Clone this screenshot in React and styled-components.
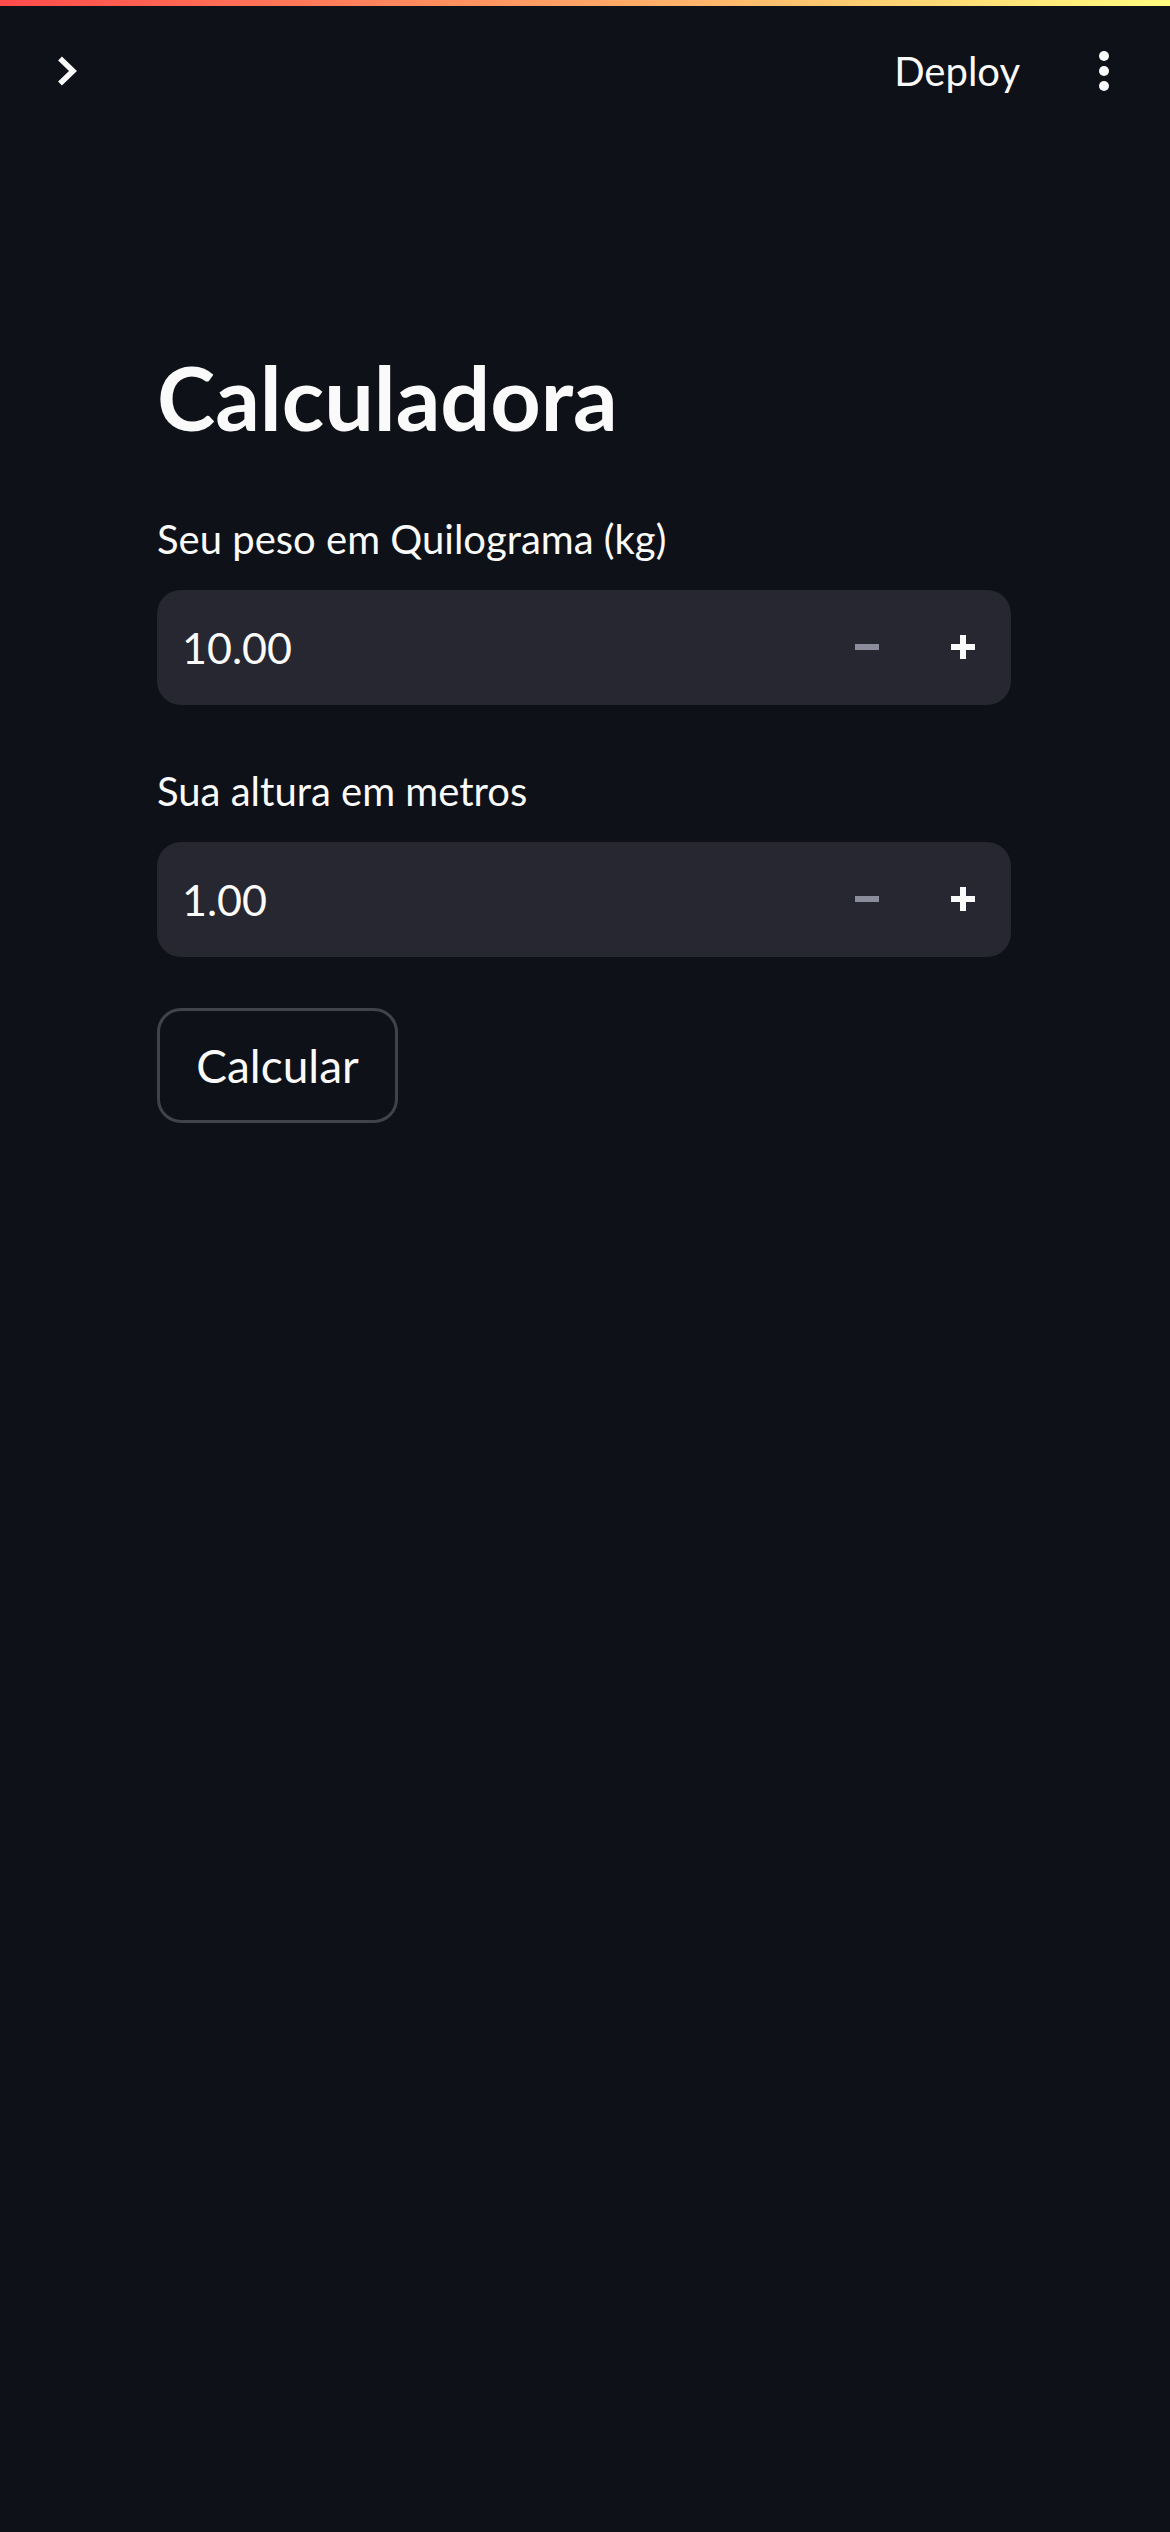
import React from 'react'
import styled, { createGlobalStyle } from 'styled-components'

const GlobalStyle = createGlobalStyle`
  html, body { margin: 0; padding: 0; background: #0e1117; }
  body { font-family: Lato, "Noto Sans", sans-serif; color: #fafafa; }
  * { box-sizing: border-box; }
`

const Page = styled.div`
  min-height: 2532px;
  background: #0e1117;
`

const Decoration = styled.div`
  height: 6px;
  background: linear-gradient(90deg, #ff4b4b, #fffd80);
`

const Header = styled.header`
  height: 130px;
  display: flex;
  align-items: center;
  justify-content: space-between;
  padding: 0 61px 0 57px;
`

const HeaderActions = styled.div`
  display: flex;
  align-items: center;
  gap: 79px;
`

const DeployLink = styled.span`
  font-size: 40px;
  line-height: 1;
`

const Main = styled.main`
  padding: 0 159px 0 157px;
`

const Title = styled.h1`
  margin: 209px 0 0;
  font-size: 88px;
  font-weight: 700;
  line-height: 1.2;
`

const Field = styled.div`
  margin-top: ${p => p.$top}px;
`

const Label = styled.label`
  display: block;
  font-size: 40px;
  line-height: 1.2;
  margin-bottom: 27px;
`

const InputBox = styled.div`
  height: 115px;
  border-radius: 24px;
  background: #262730;
  display: flex;
  align-items: center;
  padding-left: 25px;
`

const Value = styled.span`
  flex: 1;
  font-size: 43px;
`

const Step = styled.div`
  width: 96px;
  height: 100%;
  display: flex;
  align-items: center;
  justify-content: center;
`

const Minus = styled.span`
  width: 24px;
  height: 6px;
  background: #8b8d9c;
`

const Plus = styled.span`
  position: relative;
  width: 24px;
  height: 24px;
  &::before, &::after {
    content: '';
    position: absolute;
    background: #fafafa;
  }
  &::before { left: 0; top: 9px; width: 24px; height: 6px; }
  &::after { left: 9px; top: 0; width: 6px; height: 24px; }
`

const Button = styled.button`
  margin-top: 51px;
  width: 241px;
  height: 115px;
  border: 3px solid #41434b;
  border-radius: 24px;
  background: transparent;
  color: #fafafa;
  font-family: inherit;
  font-size: 46px;
`

const NumberField = ({ label, value, top }) => (
  <Field $top={top}>
    <Label>{label}</Label>
    <InputBox>
      <Value>{value}</Value>
      <Step><Minus /></Step>
      <Step><Plus /></Step>
    </InputBox>
  </Field>
)

const App = () => (
  <Page>
    <GlobalStyle />
    <Decoration />
    <Header>
      <svg width="20" height="30" viewBox="0 0 20 30">
        <path d="M3 2.5 L16 15 L3 27.5" fill="none" stroke="#fafafa" strokeWidth="5.5" />
      </svg>
      <HeaderActions>
        <DeployLink>Deploy</DeployLink>
        <svg width="10" height="40" viewBox="0 0 10 40">
          <circle cx="5" cy="5" r="5" fill="#fafafa" />
          <circle cx="5" cy="20" r="5" fill="#fafafa" />
          <circle cx="5" cy="35" r="5" fill="#fafafa" />
        </svg>
      </HeaderActions>
    </Header>
    <Main>
      <Title>Calculadora</Title>
      <NumberField top={64} label="Seu peso em Quilograma (kg)" value="10.00" />
      <NumberField top={62} label="Sua altura em metros" value="1.00" />
      <Button>Calcular</Button>
    </Main>
  </Page>
)

export default App
